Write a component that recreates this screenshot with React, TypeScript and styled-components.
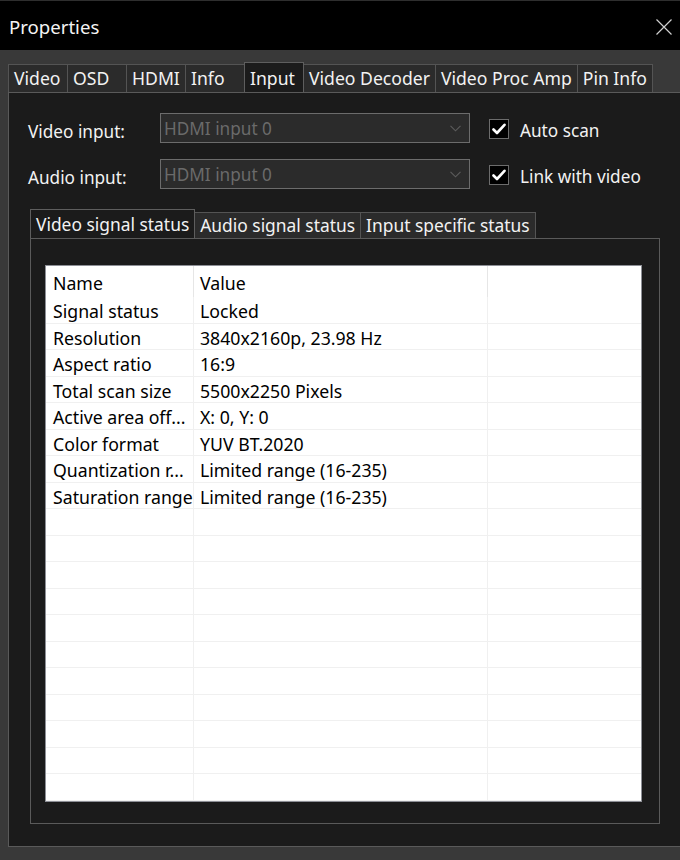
import React from "react";
import styled, { createGlobalStyle } from "styled-components";

const GlobalStyle = createGlobalStyle`
  html, body {
    margin: 0;
    padding: 0;
    background: #393939;
    overflow: hidden;
  }
  body {
    font-family: "Noto Sans", "Open Sans", sans-serif;
  }
  * { box-sizing: border-box; }
`;

const Window = styled.div`
  width: 680px;
  height: 860px;
  display: flex;
  flex-direction: column;
  background: #393939;
  overflow: hidden;
`;

const TitleBar = styled.div`
  height: 50px;
  flex: none;
  background: #000;
  border-top: 1px solid #2e2e2e;
  display: flex;
  align-items: center;
  justify-content: space-between;
  padding: 2px 8px 0 9px;
`;

const Title = styled.div`
  color: #f4f4f4;
  font-size: 18.6px;
`;

const CloseIcon = styled.svg`
  width: 16px;
  height: 16px;
  display: block;
`;

const Body = styled.div`
  flex: 1;
  display: flex;
  flex-direction: column;
  padding: 12px 0 13px 8px;
  min-height: 0;
`;

const TabStrip = styled.div`
  display: flex;
  align-items: flex-end;
  height: 30px;
  flex: none;
`;

const Tab = styled.div<{ $active?: boolean; $fixed?: boolean }>`
  height: ${(p) => (p.$active ? "30px" : "28px")};
  min-width: ${(p) => (p.$fixed ? "60px" : "0")};
  padding: 0 5px;
  margin-right: -1px;
  border: 1px solid ${(p) => (p.$active ? "#5e5e5e" : "#545454")};
  border-bottom: none;
  background: ${(p) => (p.$active ? "#1b1b1b" : "#2b2b2b")};
  color: #f2f2f2;
  font-size: 17.6px;
  line-height: 26px;
  white-space: nowrap;
  position: relative;
  z-index: ${(p) => (p.$active ? 2 : 1)};
  padding-top: ${(p) => (p.$active ? "2px" : "0")};
`;

const Pane = styled.div`
  flex: 1;
  margin-right: -40px;
  background: #1b1b1b;
  border: 1px solid #5a5a5a;
  display: flex;
  flex-direction: column;
  min-height: 0;
`;

const Form = styled.div`
  padding: 20px 0 0 19px;
  display: flex;
  flex-direction: column;
  gap: 16px;
`;

const FormRow = styled.div`
  display: flex;
  align-items: center;
  height: 30px;
`;

const Label = styled.div`
  width: 132px;
  color: #f2f2f2;
  font-size: 17.2px;
  padding-top: 7px;
  white-space: nowrap;
`;

const Combo = styled.div`
  width: 310px;
  height: 30px;
  background: #2b2b2b;
  border: 1px solid #6c6c6c;
  display: flex;
  align-items: center;
  justify-content: space-between;
  padding: 0 8px 0 3px;
  color: #6a6a6a;
  font-size: 17.2px;
`;

const Chevron = styled.svg`
  width: 11px;
  height: 7px;
  display: block;
`;

const CheckBox = styled.div`
  width: 20px;
  height: 20px;
  margin-left: 19px;
  margin-top: 2px;
  background: #000;
  border: 1px solid #6c6c6c;
  display: flex;
  align-items: center;
  justify-content: center;
  flex: none;
`;

const CheckLabel = styled.div`
  margin-left: 11px;
  padding-top: 4px;
  color: #f2f2f2;
  font-size: 17.2px;
  white-space: nowrap;
`;

const InnerSection = styled.div`
  margin-top: 20px;
  padding-left: 21px;
  display: flex;
  flex-direction: column;
  flex: 1;
  min-height: 0;
  padding-bottom: 22px;
`;

const InnerTabStrip = styled.div`
  display: flex;
  align-items: flex-end;
  height: 29px;
  flex: none;
`;

const InnerTab = styled.div<{ $active?: boolean }>`
  height: ${(p) => (p.$active ? "29px" : "26px")};
  padding: ${(p) => (p.$active ? "2px" : "0")} 5px 0 5px;
  margin-right: -1px;
  border: 1px solid ${(p) => (p.$active ? "#5e5e5e" : "#545454")};
  border-bottom: none;
  background: ${(p) => (p.$active ? "#1b1b1b" : "#2b2b2b")};
  color: #f2f2f2;
  font-size: 17.4px;
  line-height: 24px;
  white-space: nowrap;
  position: relative;
  z-index: ${(p) => (p.$active ? 2 : 1)};
`;

const InnerPane = styled.div`
  width: 630px;
  flex: 1;
  min-height: 0;
  border: 1px solid #5a5a5a;
  background: #1b1b1b;
  padding: 26px 17px 21px 14px;
  display: flex;
`;

const List = styled.div`
  flex: 1;
  background: #fff;
  border: 1px solid #8d8f96;
  overflow: hidden;
`;

const Grid = styled.div<{ $header?: boolean }>`
  display: grid;
  grid-template-columns: 148px 294px 1fr;
  height: ${(p) => (p.$header ? "31px" : "26.5px")};
  border-bottom: ${(p) => (p.$header ? "none" : "1px solid #f0f0f0")};
`;

const Cell = styled.div<{ $first?: boolean; $header?: boolean }>`
  border-right: 1px solid ${(p) => (p.$header ? "#e6e6e6" : "#f0f0f0")};
  padding-left: ${(p) => (p.$first ? "7px" : "6px")};
  padding-top: 3px;
  color: #000;
  font-size: 17.7px;
  display: flex;
  align-items: center;
  white-space: nowrap;
  overflow: hidden;
  &:last-child { border-right: none; }
`;

const rows: [string, string][] = [
  ["Signal status", "Locked"],
  ["Resolution", "3840x2160p, 23.98 Hz"],
  ["Aspect ratio", "16:9"],
  ["Total scan size", "5500x2250 Pixels"],
  ["Active area off...", "X: 0, Y: 0"],
  ["Color format", "YUV BT.2020"],
  ["Quantization r...", "Limited range (16-235)"],
  ["Saturation range", "Limited range (16-235)"],
];

const EMPTY_ROWS = 12;

const Check = () => (
  <svg width="14" height="12" viewBox="0 0 14 12">
    <path d="M1.5 6.5 L5 10 L12.5 1.8" fill="none" stroke="#fff" strokeWidth="2.6" strokeLinecap="round" strokeLinejoin="round" />
  </svg>
);

const Arrow = () => (
  <Chevron viewBox="0 0 11 7">
    <path d="M0.5 0.8 L5.5 5.8 L10.5 0.8" fill="none" stroke="#5c5c5c" strokeWidth="1.1" />
  </Chevron>
);

export default function App() {
  const topTabs = [
    { t: "Video", fixed: true },
    { t: "OSD", fixed: true },
    { t: "HDMI", fixed: true },
    { t: "Info", fixed: true },
    { t: "Input", fixed: true, active: true },
    { t: "Video Decoder" },
    { t: "Video Proc Amp" },
    { t: "Pin Info" },
  ];
  return (
    <>
      <GlobalStyle />
      <Window>
        <TitleBar>
          <Title>Properties</Title>
          <CloseIcon viewBox="0 0 16 16">
            <path d="M0.5 0.5 L15.5 15.5 M15.5 0.5 L0.5 15.5" stroke="#d0d0d0" strokeWidth="1.2" />
          </CloseIcon>
        </TitleBar>
        <Body>
          <TabStrip>
            {topTabs.map((tab) => (
              <Tab key={tab.t} $active={tab.active} $fixed={tab.fixed}>
                {tab.t}
              </Tab>
            ))}
          </TabStrip>
          <Pane>
            <Form>
              <FormRow>
                <Label>Video input:</Label>
                <Combo>
                  <span>HDMI input 0</span>
                  <Arrow />
                </Combo>
                <CheckBox>
                  <Check />
                </CheckBox>
                <CheckLabel>Auto scan</CheckLabel>
              </FormRow>
              <FormRow>
                <Label>Audio input:</Label>
                <Combo>
                  <span>HDMI input 0</span>
                  <Arrow />
                </Combo>
                <CheckBox>
                  <Check />
                </CheckBox>
                <CheckLabel>Link with video</CheckLabel>
              </FormRow>
            </Form>
            <InnerSection>
              <InnerTabStrip>
                <InnerTab $active>Video signal status</InnerTab>
                <InnerTab>Audio signal status</InnerTab>
                <InnerTab>Input specific status</InnerTab>
              </InnerTabStrip>
              <InnerPane>
                <List>
                  <Grid $header>
                    <Cell $first $header>Name</Cell>
                    <Cell $header>Value</Cell>
                    <Cell $header />
                  </Grid>
                  {rows.map(([n, v]) => (
                    <Grid key={n}>
                      <Cell $first>{n}</Cell>
                      <Cell>{v}</Cell>
                      <Cell />
                    </Grid>
                  ))}
                  {Array.from({ length: EMPTY_ROWS }).map((_, i) => (
                    <Grid key={"e" + i}>
                      <Cell $first />
                      <Cell />
                      <Cell />
                    </Grid>
                  ))}
                </List>
              </InnerPane>
            </InnerSection>
          </Pane>
        </Body>
      </Window>
    </>
  );
}
